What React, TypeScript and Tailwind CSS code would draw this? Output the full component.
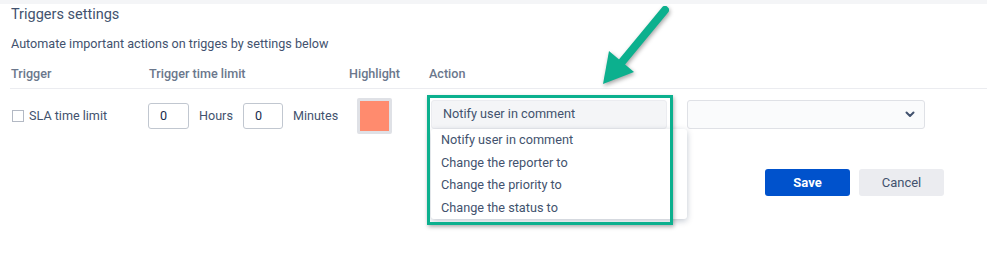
import React from "react"

const actions = [
  "Notify user in comment",
  "Change the reporter to",
  "Change the priority to",
  "Change the status to",
]

function Arrow() {
  return (
    <svg
      className="absolute left-0 top-0 pointer-events-none"
      width="999"
      height="256"
      viewBox="0 0 999 256"
      style={{ filter: "drop-shadow(1px 2px 2px rgba(0,0,0,0.35))" }}
    >
      <line x1="665" y1="10" x2="622" y2="62" stroke="#0cb08e" strokeWidth="8" strokeLinecap="round" />
      <polygon points="603,84 609,51 634,72" fill="#0cb08e" />
    </svg>
  )
}

export default function App() {
  return (
    <div className="relative w-[999px] h-[256px] bg-white overflow-hidden font-['Roboto',sans-serif] text-[#42526e]">
      <div className="h-[4px] w-[987px] bg-[#f4f5f7]" />
      <div className="w-[987px] pl-[11px]">
        <h2 className="mt-[1px] text-[14.5px] leading-[20px] font-normal">Triggers settings</h2>
        <p className="mt-[11px] text-[12.6px] leading-[16px]">Automate important actions on trigges by settings below</p>

        <div className="mt-[14px] -ml-[1px] pl-[1px] flex text-[12.6px] leading-[16px] font-medium text-[#6b778c] pb-[6px] border-b border-[#ebecf0]">
          <div className="w-[138px]">Trigger</div>
          <div className="w-[200px]">Trigger time limit</div>
          <div className="w-[80px]">Highlight</div>
          <div>Action</div>
        </div>

        <div className="flex items-center pt-[9px] text-[12.6px]">
          <div className="w-[137px] flex items-center gap-[5px] pl-[1px]">
            <span className="w-[12px] h-[12px] border border-[#b3b9c4] bg-white" />
            <span>SLA time limit</span>
          </div>
          <div className="w-[201px] flex items-center">
            <div className="w-[41px] h-[26px] border border-[#c1c7d0] rounded-[3px] flex items-center pl-[11px] text-[#172b4d]">0</div>
            <span className="ml-[10px]">Hours</span>
            <div className="ml-[10px] w-[40px] h-[26px] border border-[#c1c7d0] rounded-[3px] flex items-center pl-[11px] text-[#172b4d]">0</div>
            <span className="ml-[10px]">Minutes</span>
          </div>
          <div className="w-[82px] pl-[8px]">
            <div className="w-[35px] h-[36px] border-[3px] border-[#dfe1e6] rounded-[2px] bg-[#ff8b6e]" />
          </div>
          <div className="flex items-center gap-[20px] -mt-[4px]">
            <div className="relative w-[236px] h-[29px] bg-[#f4f5f7] border border-[#ebecf0] rounded-[3px] flex items-center pl-[11px] text-[12.7px]">
              Notify user in comment
              <div className="absolute left-[-1px] top-[28px] w-[256px] bg-white shadow-[0_2px_6px_rgba(9,30,66,0.25)] rounded-[3px] text-[12.7px]">
                {actions.map((a) => (
                  <div key={a} className="h-[22.5px] flex items-center pl-[10px]">
                    {a}
                  </div>
                ))}
              </div>
            </div>
            <div className="w-[238px] h-[29px] bg-[#fafbfc] border border-[#dfe1e6] rounded-[3px] flex items-center justify-end pr-[8px]">
              <svg width="12" height="12" viewBox="0 0 24 24" fill="none" stroke="#42526e" strokeWidth="4" strokeLinecap="round" strokeLinejoin="round">
                <path d="M5 9l7 7 7-7" />
              </svg>
            </div>
          </div>
        </div>

        <div className="flex justify-end gap-[9px] mt-[35px] pr-[43px]">
          <button className="w-[85px] h-[27px] rounded-[3px] bg-[#0052cc] text-white text-[13px] font-bold">Save</button>
          <button className="w-[85px] h-[27px] rounded-[3px] bg-[#ebecf0] text-[#42526e] text-[13px]">Cancel</button>
        </div>
      </div>

      <div className="absolute left-[427px] top-[95px] w-[246px] h-[130px] border-[3px] border-[#0cb08e] shadow-[1px_2px_4px_rgba(0,0,0,0.3)]" />
      <Arrow />
    </div>
  )
}
